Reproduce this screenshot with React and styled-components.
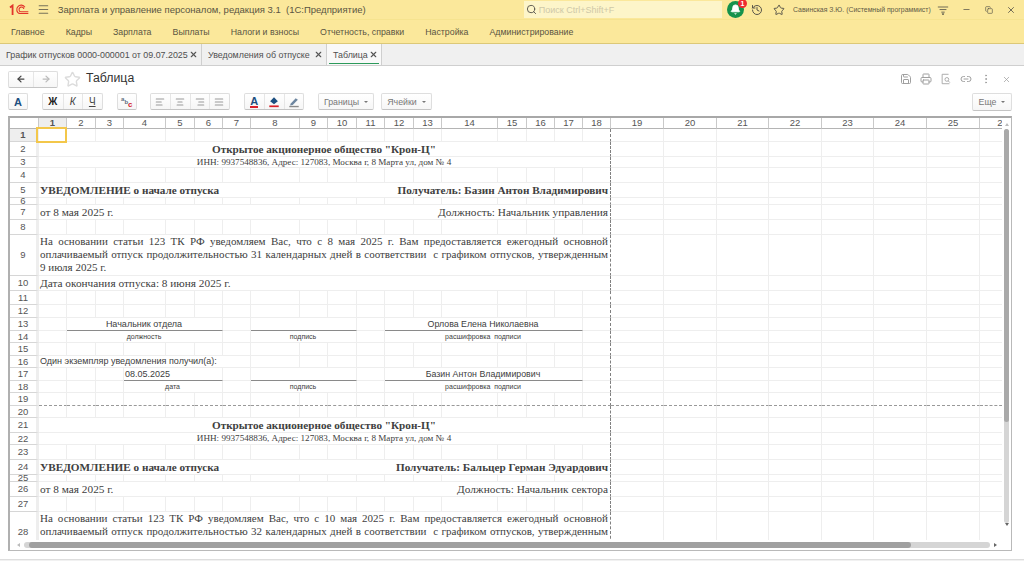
import React from 'react'
import styled, { createGlobalStyle } from 'styled-components'
import {
  AlignCenter,
  AlignJustify,
  AlignLeft,
  AlignRight,
  ArrowLeft,
  ArrowRight,
  Bell,
  Copy,
  EllipsisVertical,
  History,
  Link2,
  Menu,
  Minus,
  Printer,
  Save,
  Search,
  Star,
  X,
} from 'lucide-react'

const GlobalStyle = createGlobalStyle`
  html, body {
    margin: 0;
    padding: 0;
    background: #fff;
  }
  * {
    box-sizing: border-box;
  }
`

const Page = styled.div`
  width: 1024px;
  height: 561px;
  display: flex;
  flex-direction: column;
  overflow: hidden;
  background: #fff;
  color: #4b4b4b;
  font-family: 'Liberation Sans', Arial, sans-serif;
`

const TitleBar = styled.div`
  height: 20px;
  display: flex;
  align-items: center;
  padding-left: 9px;
  background: #fbe89b;
  border-bottom: 1px solid #f6e38f;
`

const Logo = styled.svg`
  width: 20px;
  height: 12px;
  margin-right: 8px;
`

const Burger = styled(Menu)`
  width: 13px;
  height: 13px;
  color: #77715a;
  margin-right: 8px;
`

const AppName = styled.div`
  width: 470px;
  font-size: 9.5px;
  color: #5a5542;
  white-space: pre;
`

const SearchBox = styled.div`
  width: 200px;
  height: 17px;
  display: flex;
  align-items: center;
  gap: 2px;
  padding-left: 2px;
  background: #fdf5c9;
  font-size: 9px;
  color: #cfc8a8;

  svg {
    width: 11px;
    height: 11px;
    color: #55524a;
  }
`

const Notify = styled.div`
  position: relative;
  width: 17px;
  height: 17px;
  margin-left: 5px;
  display: flex;
  align-items: center;
  justify-content: center;
  border-radius: 50%;
  background: #15924c;
  color: #fff;

  svg {
    width: 11px;
    height: 11px;
    fill: #fff;
  }
`

const Badge = styled.span`
  position: absolute;
  top: -2px;
  right: -3px;
  width: 9px;
  height: 9px;
  border-radius: 50%;
  background: #ee2a2f;
  color: #fff;
  font-size: 7px;
  font-weight: 700;
  line-height: 9px;
  text-align: center;
`

const TopIcon = styled.div`
  width: ${(p) => p.$w}px;
  flex: none;
  display: flex;
  justify-content: center;
  color: #59564a;

  svg {
    width: ${(p) => p.$s || 12}px;
    height: ${(p) => p.$s || 12}px;
  }
`

const UserName = styled.div`
  margin-left: 5px;
  width: 142px;
  flex: none;
  font-size: 6.9px;
  color: #5f5a46;
  white-space: nowrap;
`

const MainMenu = styled.div`
  height: 24px;
  display: flex;
  align-items: center;
  padding-left: 0.5px;
  background: #fbe89b;
  border-bottom: 1px solid #dcc878;
`

const MenuItem = styled.div`
  padding: 0 10.5px;
  font-size: 8.8px;
  color: #5a5542;
  white-space: nowrap;
`

const TabBar = styled.div`
  height: 22px;
  display: flex;
  background: #f0f0f0;
  border-bottom: 1px solid #cfcfcf;
`

const Tab = styled.div`
  position: relative;
  width: ${(p) => p.$w}px;
  display: flex;
  align-items: center;
  justify-content: space-between;
  padding: 0 3px 0 6px;
  background: ${(p) => (p.$active ? '#f9f9f9' : 'transparent')};
  border-right: 1px solid #cfcfcf;
  font-size: 8.9px;
  color: #4f4f4f;
  white-space: nowrap;

  svg {
    width: 9px;
    height: 9px;
    stroke-width: 3;
    color: #555;
  }

  ${(p) =>
    p.$active &&
    `&::after {
      content: '';
      position: absolute;
      left: 2px;
      right: 2px;
      bottom: 1px;
      height: 1px;
      background: #2c9a5b;
    }`}
`

const Content = styled.div`
  flex: 1;
  display: flex;
  flex-direction: column;
  padding: 5px 12px 0 8px;
  min-height: 0;
`

const NavRow = styled.div`
  height: 16px;
  display: flex;
  align-items: center;
`

const FormTitle = styled.div`
  margin-left: 5px;
  padding-bottom: 2px;
  font-size: 12.3px;
  color: #333;
`

const FavStar = styled(Star)`
  width: 17px;
  height: 17px;
  margin-left: 6px;
  color: #dcdcdc;
`

const FormIcons = styled.div`
  margin-left: auto;
  display: flex;
  align-items: center;
  gap: 8px;
  color: #a0a0a0;

  svg {
    width: 12px;
    height: 12px;
  }

  svg:last-child {
    width: 9px;
    height: 9px;
    margin: 0 1.5px;
  }
`

const ToolRow = styled.div`
  height: 18px;
  margin-top: 6px;
  display: flex;
  align-items: flex-start;
`

const Group = styled.div`
  display: flex;
  height: 17px;
  margin-left: ${(p) => p.$gap || 0}px;
  background: linear-gradient(#fff, #f6f6f6);
  border: 1px solid #dedede;
  border-bottom-color: #c4c4c4;
  border-radius: 2px;
`

const ToolButton = styled.div`
  width: ${(p) => p.$w || 19.5}px;
  display: flex;
  align-items: center;
  justify-content: center;
  border-left: 1px solid #e6e6e6;
  color: #999;
  font-size: 10px;

  &:first-child {
    border-left: 0;
  }

  svg {
    width: ${(p) => p.$s || 12}px;
    height: ${(p) => p.$s || 12}px;
  }
`

const Glyph = styled.span`
  font-size: 10px;
  color: ${(p) => (p.$bold ? '#1f1f1f' : '#444')};
  font-weight: ${(p) => (p.$bold ? 700 : 400)};
  font-style: ${(p) => (p.$italic ? 'italic' : 'normal')};
  text-decoration: ${(p) => (p.$under ? 'underline' : 'none')};
`

const ColorA = styled.span`
  font-size: 11px;
  font-weight: 700;
  color: ${(p) => p.$color || '#1c4f80'};
  line-height: 10px;
  border-bottom: ${(p) => (p.$line ? `2px solid ${p.$line}` : '0')};
`

const TextButton = styled.div`
  width: ${(p) => p.$w}px;
  height: ${(p) => p.$h || 17}px;
  margin-left: ${(p) => p.$gap || 0}px;
  display: flex;
  align-items: center;
  justify-content: center;
  gap: 5px;
  background: linear-gradient(#fff, #f6f6f6);
  border: 1px solid #dedede;
  border-bottom-color: #c4c4c4;
  border-radius: 2px;
  font-size: 8.8px;
  color: #777;

  &::after {
    content: '';
    border: 2px solid transparent;
    border-top: 2px solid #777;
    margin-top: 2px;
  }
`

const MoreButton = styled(TextButton)`
  margin-left: auto;
`

const Sheet = styled.div`
  height: 435px;
  margin-top: 5px;
  display: grid;
  grid-template-columns: 1fr 9px;
  grid-template-rows: 1fr 10px;
  border: 1px solid #b9b9b9;
  border-top: 2px solid #a8a8a8;
  border-left: 2px solid #b0b0b0;
`

const Viewport = styled.div`
  overflow: hidden;
  min-height: 0;
`

const SheetGrid = styled.div`
  display: grid;
  width: max-content;
  grid-template-columns: 29px ${(p) => p.$cols};
  grid-template-rows: 11px ${(p) => p.$rows};
`

const ColHead = styled.div`
  border-right: 1px solid #c9c9c9;
  border-bottom: 1px solid #b4b4b4;
  background: ${(p) => (p.$selected ? '#eeeeee' : '#fff')};
  font-size: 9.5px;
  line-height: 9px;
  text-align: center;
  color: #555;
  font-weight: ${(p) => (p.$selected ? 700 : 400)};
  overflow: hidden;
`

const RowHead = styled.div`
  display: flex;
  align-items: center;
  justify-content: center;
  padding-bottom: 1px;
  border-right: 3px solid #eeeeee;
  border-bottom: 1px solid #d6d6d6;
  background: ${(p) => (p.$selected ? '#eeeeee' : '#fff')};
  font-size: 9.5px;
  color: #555;
  font-weight: ${(p) => (p.$selected ? 700 : 400)};
  overflow: hidden;
`

const Cell = styled.div`
  position: relative;
  grid-column: span ${(p) => p.$span};
  min-width: 0;
  display: flex;
  align-items: center;
  justify-content: ${(p) => p.$justify || 'flex-start'};
  padding: 0 2px 1px 1px;
  border-right: 1px ${(p) => (p.$break ? 'dashed #808080' : 'solid #eeeeee')};
  border-bottom: 1px
    ${(p) =>
      p.$pageEnd ? 'dashed #999999' : p.$line ? 'solid #8a8a8a' : 'solid #eeeeee'};
  font-family: ${(p) =>
    p.$serif ? "'Liberation Serif', 'Times New Roman', serif" : "'Liberation Sans', Arial, sans-serif"};
  font-size: ${(p) => p.$size}px;
  font-weight: ${(p) => (p.$bold ? 700 : 400)};
  color: #404040;
  white-space: pre;
`

const Paragraph = styled.div`
  width: 100%;
  font-size: 11px;
  line-height: 13px;
  text-align: justify;
  white-space: pre-wrap;
`

const CurrentCell = styled.div`
  position: absolute;
  inset: -2px -1px -2px -3px;
  border: 2px solid #f3c74a;
  z-index: 2;
`

const VScroll = styled.div`
  display: flex;
  flex-direction: column;
  align-items: center;
  padding: 3px 0 0;
`

const VTrack = styled.div`
  width: 5px;
  height: 394px;
  margin: 3px 0 0;
  border-radius: 3px;
  background: #d5d5d5;
`

const VThumb = styled.div`
  height: 293px;
  border-radius: 3px;
  background: #a9a9a9;
`

const HScroll = styled.div`
  display: flex;
  align-items: center;
  padding-left: 5px;
`

const HTrack = styled.div`
  width: 966px;
  height: 6px;
  margin: 0 4px;
  padding-left: 5px;
  border-radius: 3px;
  background: #d5d5d5;
`

const HThumb = styled.div`
  width: 882px;
  height: 6px;
  border-radius: 3px;
  background: #a0a0a0;
`

const Arrow = styled.span`
  width: 0;
  height: 0;
  border: 2px solid transparent;
  ${(p) => `border-${p.$side}: 3px solid ${p.$dark ? '#666' : '#bbb'};`}
`

const BottomStrip = styled.div`
  height: 2px;
  margin-top: auto;
  background: #f1f1f1;
  border-top: 1px solid #dedede;
`

const colWidths = [
  28, 29, 28, 42, 29, 28, 28, 49, 28, 29, 28, 29, 28, 56, 29, 28, 28, 28, 53, 53, 52, 53, 52, 53, 53, 46,
]

const menu = [
  'Главное',
  'Кадры',
  'Зарплата',
  'Выплаты',
  'Налоги и взносы',
  'Отчетность, справки',
  'Настройка',
  'Администрирование',
]

const org = 'Открытое акционерное общество "Крон-Ц"'
const inn = 'ИНН: 9937548836, Адрес: 127083, Москва г, 8 Марта ул, дом № 4'
const notice = 'УВЕДОМЛЕНИЕ о начале отпуска'

const headLine = (text) => ({ from: 1, to: 18, text, serif: true, bold: true, size: 11.2, justify: 'center' })
const innLine = { from: 1, to: 18, text: inn, serif: true, size: 9.15, justify: 'center' }
const pairLine = (left, right, bold) => ({
  from: 1,
  to: 18,
  serif: true,
  bold,
  size: bold ? 11.2 : 11.3,
  justify: 'space-between',
  pair: [left, right],
})
const signLine = (first, second, third, firstFrom = 2) => [
  { from: firstFrom, to: 6, text: first, size: 9, line: true, justify: firstFrom === 4 ? 'flex-start' : 'center' },
  { from: 8, to: 10, text: second, size: 9, line: true, justify: 'center' },
  { from: 12, to: 17, text: third, size: 8.8, justify: 'center', line: true },
]
const labels = (first, firstFrom = 2) => [
  { from: firstFrom, to: 6, text: first, size: 7, justify: 'center' },
  { from: 8, to: 10, text: 'подпись', size: 7, justify: 'center' },
  { from: 12, to: 17, text: 'расшифровка  подписи', size: 7, justify: 'center' },
]

const rows = [
  { h: 13, cells: [] },
  { h: 15, cells: [headLine(org)] },
  { h: 11, cells: [innLine] },
  { h: 15, cells: [] },
  { h: 15, cells: [pairLine(notice, 'Получатель: Базин Антон Владимирович', true)] },
  { h: 7, cells: [] },
  { h: 15, cells: [pairLine('от 8 мая 2025 г.', 'Должность: Начальник управления')] },
  { h: 15, cells: [] },
  {
    h: 41,
    cells: [
      {
        from: 1,
        to: 18,
        serif: true,
        para:
          'На основании статьи 123 ТК РФ уведомляем Вас, что с 8 мая 2025 г. Вам предоставляется ежегодный основной оплачиваемый отпуск продолжительностью 31 календарных дней в соответствии  с графиком отпусков, утвержденным 9 июля 2025 г.',
      },
    ],
  },
  { h: 15, cells: [{ from: 1, to: 18, text: 'Дата окончания отпуска: 8 июня 2025 г.', serif: true, size: 11.3 }] },
  { h: 14, cells: [] },
  { h: 13, cells: [] },
  { h: 13, cells: signLine('Начальник отдела', '', 'Орлова Елена Николаевна') },
  { h: 12, cells: labels('должность') },
  { h: 13, cells: [] },
  { h: 12, cells: [{ from: 1, to: 7, text: 'Один экземпляр уведомления получил(а):', size: 9 }] },
  { h: 13, cells: signLine('08.05.2025', '', 'Базин Антон Владимирович', 4) },
  { h: 12, cells: labels('дата', 4) },
  { h: 13, cells: [], pageEnd: true },
  { h: 12, cells: [] },
  { h: 15, cells: [headLine(org)] },
  { h: 12, cells: [innLine] },
  { h: 15, cells: [] },
  { h: 15, cells: [pairLine(notice, 'Получатель: Бальцер Герман Эдуардович', true)] },
  { h: 7, cells: [] },
  { h: 15, cells: [pairLine('от 8 мая 2025 г.', 'Должность: Начальник сектора')] },
  { h: 15, cells: [] },
  {
    h: 41,
    cells: [
      {
        from: 1,
        to: 18,
        serif: true,
        para:
          'На основании статьи 123 ТК РФ уведомляем Вас, что с 10 мая 2025 г. Вам предоставляется ежегодный основной оплачиваемый отпуск продолжительностью 32 календарных дней в соответствии  с графиком отпусков, утвержденным 8 июня 2025 г.',
      },
    ],
  },
]

function OneCLogo() {
  return (
    <Logo viewBox="0 0 20 12" fill="none" stroke="#e2342b">
      <path d="M1 3.5 3.6 1.5V11" strokeWidth="1.8" />
      <path d="M16 3.2A4.2 4.2 0 0 0 9 2.6C6.8 4.6 7.6 9.5 11.5 9.5H19.5" strokeWidth="1.2" />
      <path d="M15 5A2.4 2.4 0 0 0 10.2 6C10.2 7 11 7.8 12 7.8H19.5" strokeWidth="1.1" />
    </Logo>
  )
}

function SpellIcon() {
  return (
    <svg viewBox="0 0 16 14">
      <text x="1" y="6" fontSize="7" fontWeight="700" fill="#5f6f80" fontFamily="Liberation Sans">a</text>
      <text x="5" y="9" fontSize="7" fontWeight="700" fill="#5f6f80" fontFamily="Liberation Sans">b</text>
      <text x="9" y="13" fontSize="9" fontWeight="700" fill="#d4202a" fontFamily="Liberation Sans">c</text>
    </svg>
  )
}

function FillIcon() {
  return (
    <svg viewBox="0 0 14 14">
      <path d="M7 1.5 11.5 6 7 9.5 2.5 6Z" fill="#1c4f80" />
      <rect x="1.5" y="11" width="11" height="2" fill="#d9202a" />
    </svg>
  )
}

function PenIcon() {
  return (
    <svg viewBox="0 0 14 14">
      <path d="M3 9 9 2.5 11.5 4.5 5.5 10.5 2.5 11Z" fill="#6d86a0" />
      <rect x="1.5" y="11.5" width="11" height="1.6" fill="#8a8a8a" />
    </svg>
  )
}

function PreviewIcon() {
  return (
    <svg viewBox="0 0 14 14" fill="none" stroke="currentColor">
      <path d="M10 1.5H2.5V12.5H11" />
      <circle cx="8" cy="7.5" r="2.2" />
      <path d="M9.6 9.2 11.5 11.2" />
    </svg>
  )
}

function PanelMenuIcon() {
  return (
    <svg viewBox="0 0 14 12" fill="none" stroke="currentColor">
      <path d="M1 2.5H13M3 5.5H11M5 8.5H9" />
      <path d="M6 10.5H8L7 11.5Z" fill="currentColor" />
    </svg>
  )
}

function SheetRow({ row, index }) {
  const cells = []
  let col = 1
  while (col <= colWidths.length) {
    const merged = row.cells.find((c) => c.from === col)
    const to = merged ? merged.to : col
    const isCurrent = index === 0 && col === 1
    cells.push(
      <Cell
        key={col}
        $span={to - col + 1}
        $break={to === 18}
        $pageEnd={row.pageEnd}
        $line={merged?.line}
        $serif={merged?.serif}
        $bold={merged?.bold}
        $size={merged?.size || 10}
        $justify={merged?.justify}
      >
        {merged?.pair ? (
          <>
            <span>{merged.pair[0]}</span>
            <span>{merged.pair[1]}</span>
          </>
        ) : merged?.para ? (
          <Paragraph>{merged.para}</Paragraph>
        ) : (
          merged?.text
        )}
        {isCurrent && <CurrentCell />}
      </Cell>
    )
    col = to + 1
  }
  return (
    <>
      <RowHead $selected={index === 0}>{index + 1}</RowHead>
      {cells}
    </>
  )
}

export default function App() {
  return (
    <Page>
      <GlobalStyle />
      <TitleBar>
        <OneCLogo />
        <Burger />
        <AppName>Зарплата и управление персоналом, редакция 3.1  (1С:Предприятие)</AppName>
        <SearchBox>
          <Search />
          Поиск Ctrl+Shift+F
        </SearchBox>
        <Notify>
          <Bell />
          <Badge>1</Badge>
        </Notify>
        <TopIcon $w={26}>
          <History />
        </TopIcon>
        <TopIcon $w={18}>
          <Star />
        </TopIcon>
        <UserName>Савинская З.Ю. (Системный программист)</UserName>
        <TopIcon $w={16}>
          <PanelMenuIcon />
        </TopIcon>
        <TopIcon $w={30} $s={9}>
          <Minus />
        </TopIcon>
        <TopIcon $w={16} $s={8}>
          <Copy />
        </TopIcon>
        <TopIcon $w={27} $s={10}>
          <X />
        </TopIcon>
      </TitleBar>
      <MainMenu>
        {menu.map((item) => (
          <MenuItem key={item}>{item}</MenuItem>
        ))}
      </MainMenu>
      <TabBar>
        <Tab $w={202}>
          График отпусков 0000-000001 от 09.07.2025
          <X />
        </Tab>
        <Tab $w={125}>
          Уведомления об отпуске
          <X />
        </Tab>
        <Tab $w={55} $active>
          Таблица
          <X />
        </Tab>
      </TabBar>
      <Content>
        <NavRow>
          <Group>
            <ToolButton $w={24} $s={10}>
              <ArrowLeft color="#444" strokeWidth={3} />
            </ToolButton>
            <ToolButton $w={24} $s={10}>
              <ArrowRight color="#bbb" strokeWidth={3} />
            </ToolButton>
          </Group>
          <FavStar />
          <FormTitle>Таблица</FormTitle>
          <FormIcons>
            <Save />
            <Printer />
            <PreviewIcon />
            <Link2 />
            <EllipsisVertical />
            <X />
          </FormIcons>
        </NavRow>
        <ToolRow>
          <Group>
            <ToolButton $w={18}>
              <ColorA>A</ColorA>
            </ToolButton>
          </Group>
          <Group $gap={14}>
            <ToolButton>
              <Glyph $bold>Ж</Glyph>
            </ToolButton>
            <ToolButton>
              <Glyph $italic>К</Glyph>
            </ToolButton>
            <ToolButton>
              <Glyph $under>Ч</Glyph>
            </ToolButton>
          </Group>
          <Group $gap={14}>
            <ToolButton $w={18} $s={14}>
              <SpellIcon />
            </ToolButton>
          </Group>
          <Group $gap={13}>
            <ToolButton $s={10}>
              <AlignLeft strokeWidth={2.5} />
            </ToolButton>
            <ToolButton $s={10}>
              <AlignCenter strokeWidth={2.5} />
            </ToolButton>
            <ToolButton $s={10}>
              <AlignRight strokeWidth={2.5} />
            </ToolButton>
            <ToolButton $s={10}>
              <AlignJustify strokeWidth={2.5} />
            </ToolButton>
          </Group>
          <Group $gap={14}>
            <ToolButton>
              <ColorA $line="#d9202a">A</ColorA>
            </ToolButton>
            <ToolButton>
              <FillIcon />
            </ToolButton>
            <ToolButton>
              <PenIcon />
            </ToolButton>
          </Group>
          <TextButton $w={56} $gap={14}>Границы</TextButton>
          <TextButton $w={51} $gap={7}>Ячейки</TextButton>
          <MoreButton $w={40} $h={18}>Еще</MoreButton>
        </ToolRow>
        <Sheet>
          <Viewport>
            <SheetGrid
              $cols={colWidths.map((w) => `${w}px`).join(' ')}
              $rows={rows.map((r) => `${r.h}px`).join(' ')}
            >
              <ColHead />
              {colWidths.map((_, i) => (
                <ColHead key={i} $selected={i === 0}>
                  {i + 1}
                </ColHead>
              ))}
              {rows.map((row, i) => (
                <SheetRow key={i} row={row} index={i} />
              ))}
            </SheetGrid>
          </Viewport>
          <VScroll>
            <Arrow $side="bottom" />
            <VTrack>
              <VThumb />
            </VTrack>
            <Arrow $side="top" $dark />
          </VScroll>
          <HScroll>
            <Arrow $side="right" />
            <HTrack>
              <HThumb />
            </HTrack>
            <Arrow $side="left" $dark />
          </HScroll>
        </Sheet>
      </Content>
      <BottomStrip />
    </Page>
  )
}
